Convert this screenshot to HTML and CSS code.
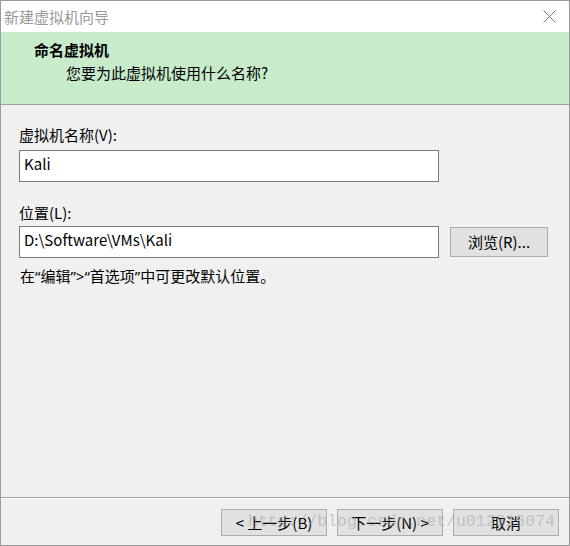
FILE: index.html
```html
<!DOCTYPE html>
<html lang="zh-CN">
<head>
<meta charset="utf-8">
<title>新建虚拟机向导</title>
<link rel="stylesheet" href="styles.css">
</head>
<body>
<div class="window">
  <div class="titlebar">
    <span class="title">新建虚拟机向导</span>
    <svg class="close" width="13" height="13" viewBox="0 0 13 13"><path d="M0.5 0.5 L12.5 12.5 M12.5 0.5 L0.5 12.5" stroke="#707070" stroke-width="1" fill="none"/></svg>
  </div>
  <div class="header">
    <div class="heading">命名虚拟机</div>
    <div class="subtitle">您要为此虚拟机使用什么名称?</div>
  </div>
  <div class="content">
    <div class="label label-first">虚拟机名称(V):</div>
    <div class="input input-first">Kali</div>
    <div class="label label-second">位置(L):</div>
    <div class="row">
      <div class="input">D:\Software\VMs\Kali</div>
      <div class="btn browse">浏览(R)...</div>
    </div>
    <div class="hint">在<span class="q">“</span>编辑<span class="q">”&gt;“</span>首选项<span class="q">”</span>中可更改默认位置。</div>
  </div>
  <div class="footer">
    <div class="btn nav">&lt; 上一步(B)</div>
    <div class="btn nav">下一步(N) &gt;</div>
    <div class="btn nav">取消</div>
    <div class="watermark">http://blog.csdn.net/u012318074</div>
  </div>
</div>
</body>
</html>
```
FILE: styles.css
```css
* { box-sizing: border-box; }
html, body { margin: 0; padding: 0; background: #f0f0f0; }
body {
  font-family: "Noto Sans CJK SC", "Noto Sans", sans-serif;
  font-size: 15px;
  line-height: 20px;
  color: #000;
}
.window {
  width: 570px;
  height: 546px;
  border: 1px solid #9a9a9a;
  display: flex;
  flex-direction: column;
  background: #f0f0f0;
}
.titlebar {
  height: 31px;
  background: #fff;
  display: flex;
  align-items: center;
  justify-content: space-between;
  padding: 0 13px 0 3px;
}
.title { color: #9a9a9a; }
.close { display: block; margin-top: -1px; }
.header {
  height: 73px;
  background: #c7ebcb;
  border-bottom: 1px solid #a0a0a0;
  padding: 8px 0 0 33px;
}
.heading { font-weight: bold; }
.subtitle { margin-top: 3px; padding-left: 32px; }
.content {
  flex: 1;
  padding: 20px 0 0 18px;
}
.input {
  width: 420px;
  height: 32px;
  background: #fff;
  border: 1px solid #7a7a7a;
  padding: 3px 4px 0 4px;
}
.input-first { margin-top: 5px; }
.label-second { margin-top: 21px; }
.row {
  display: flex;
  align-items: center;
  gap: 11px;
  margin-top: 3px;
}
.btn {
  background: #e1e1e1;
  border: 1px solid #adadad;
  display: flex;
  align-items: center;
  justify-content: center;
}
.browse { width: 98px; height: 30px; }
.hint { margin-top: 8px; padding-left: 1px; }
.q { font-family: "Noto Sans", sans-serif; }
.footer {
  position: relative;
  height: 48px;
  border-top: 1px solid #a0a0a0;
  box-shadow: inset 0 1px 0 #fff;
  display: flex;
  justify-content: flex-end;
  gap: 10px;
  padding: 11px 10px 0 0;
}
.nav { width: 106px; height: 27px; }
.watermark {
  position: absolute;
  left: 247px;
  top: 14px;
  font-family: "Liberation Mono", monospace;
  font-size: 16.5px;
  line-height: 20px;
  color: rgba(150, 150, 150, 0.45);
  pointer-events: none;
  white-space: nowrap;
}
```
